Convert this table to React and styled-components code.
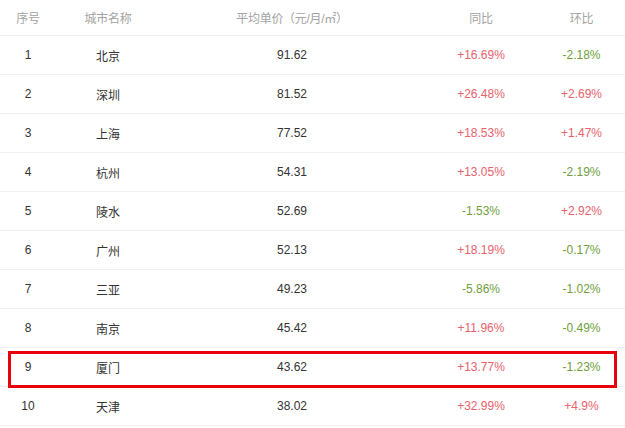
import React from "react";
import styled, { createGlobalStyle } from "styled-components";

const GlobalStyle = createGlobalStyle`
  html, body {
    margin: 0;
    padding: 0;
    background: #fff;
  }
  body {
    font-family: "Liberation Sans", "Noto Sans CJK SC", sans-serif;
    font-size: 12px;
    color: #333;
  }
`;

const rows = [
  { id: 1, city: "北京", price: "91.62", yoy: "+16.69%", mom: "-2.18%" },
  { id: 2, city: "深圳", price: "81.52", yoy: "+26.48%", mom: "+2.69%" },
  { id: 3, city: "上海", price: "77.52", yoy: "+18.53%", mom: "+1.47%" },
  { id: 4, city: "杭州", price: "54.31", yoy: "+13.05%", mom: "-2.19%" },
  { id: 5, city: "陵水", price: "52.69", yoy: "-1.53%", mom: "+2.92%" },
  { id: 6, city: "广州", price: "52.13", yoy: "+18.19%", mom: "-0.17%" },
  { id: 7, city: "三亚", price: "49.23", yoy: "-5.86%", mom: "-1.02%" },
  { id: 8, city: "南京", price: "45.42", yoy: "+11.96%", mom: "-0.49%" },
  { id: 9, city: "厦门", price: "43.62", yoy: "+13.77%", mom: "-1.23%", marked: true },
  { id: 10, city: "天津", price: "38.02", yoy: "+32.99%", mom: "+4.9%" },
];

const Table = styled.div`
  width: 625px;
`;

const Row = styled.div`
  position: relative;
  display: grid;
  grid-template-columns: 56px 104px 264px 114px 87px;
  align-items: center;
  height: ${({ $head }) => ($head ? "35px" : "38px")};
  border-bottom: 1px solid #f0f0f0;

  ${({ $marked }) =>
    $marked &&
    `
    &::after {
      content: "";
      position: absolute;
      left: 8px;
      right: 8px;
      top: 3px;
      bottom: -2px;
      border: 3px solid #e8000b;
      pointer-events: none;
    }
  `}
`;

const Cell = styled.div`
  text-align: center;
  color: ${({ $head }) => ($head ? "#a3a3a3" : "#333")};
  letter-spacing: ${({ $head }) => ($head ? "-0.3px" : "0")};
`;

const Change = styled.div`
  text-align: center;
  color: ${({ $up }) => ($up ? "#e8626c" : "#6f9e3c")};
`;

const App = () => {
  return (
    <>
      <GlobalStyle />
      <Table>
        <Row $head>
          <Cell $head>序号</Cell>
          <Cell $head>城市名称</Cell>
          <Cell $head>平均单价（元/月/㎡）</Cell>
          <Cell $head>同比</Cell>
          <Cell $head>环比</Cell>
        </Row>
        {rows.map((r) => (
          <Row key={r.id} $marked={r.marked}>
            <Cell>{r.id}</Cell>
            <Cell>{r.city}</Cell>
            <Cell>{r.price}</Cell>
            <Change $up={r.yoy.startsWith("+")}>{r.yoy}</Change>
            <Change $up={r.mom.startsWith("+")}>{r.mom}</Change>
          </Row>
        ))}
      </Table>
    </>
  );
};

export default App;
